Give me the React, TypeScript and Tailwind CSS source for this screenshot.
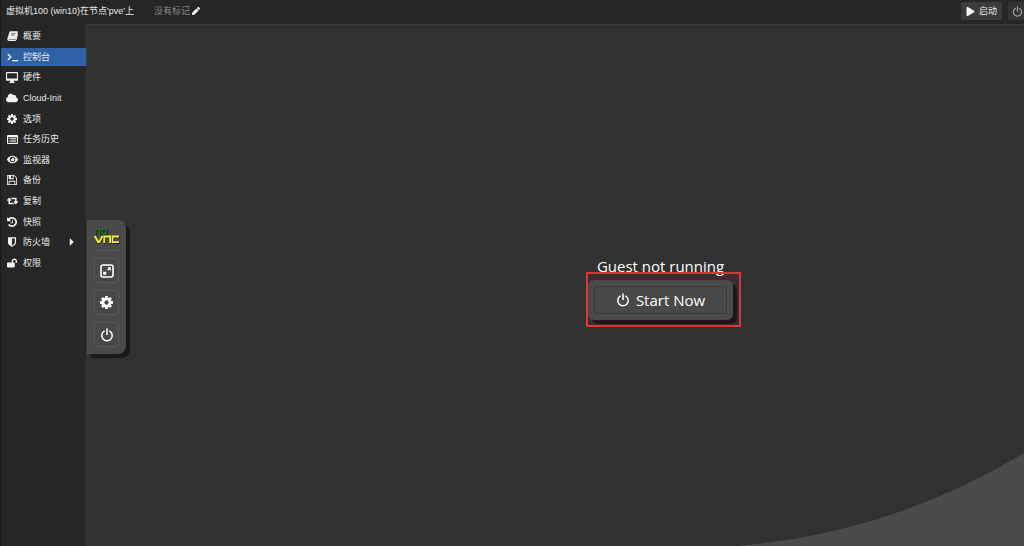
import { useState } from "react"
import type { ReactNode } from "react"
import { FaCaretRight, FaCloud, FaEye, FaLockOpen, FaPen, FaPlay } from "react-icons/fa"

function BookIcon() {
  return (
    <svg viewBox="0 0 11 10" className="w-[11px] h-[10px]">
      <path
        d="M3.9 .2h5.9c.8 0 1.200.6 1 1.300L9.200 7c-.2.600-.6.900-1.200.900H2.200c-.5 0-.6.600 0 .600h6c.4 0 .6-.2.700-.5l1.700-5.200c.4.200.5.600.4 1L9.600 8.800c-.2.700-.7 1.100-1.400 1.100H2C.9 9.900 0 8.800.4 7.600L2.300 1.500C2.500.7 3.100.2 3.900.2z"
        fill="currentColor"
      />
      <path d="M4.300 2.400h4.200M3.800 4h4.200" stroke="#262626" strokeWidth=".6" />
    </svg>
  )
}

function TerminalIcon() {
  return (
    <svg viewBox="0 0 11 10" className="w-[11px] h-[10px]" fill="none" stroke="currentColor" strokeWidth="1.300">
      <path d="M.8 2l3 3-3 3M5 8.600h6" />
    </svg>
  )
}

function DesktopIcon() {
  return (
    <svg viewBox="0 0 11 10" className="w-3 h-[11px]">
      <path
        d="M.9 0h9.200c.5 0 .9.400.9.900v6.200c0 .5-.4.900-.9.900H7l.3 1.200h.5V10H3.200v-.8h.5L4 8H.9C.4 8 0 7.600 0 7.100V.9C0 .4.400 0 .9 0zm.1 1v5h9V1z"
        fill="currentColor"
        fillRule="evenodd"
      />
    </svg>
  )
}

function CogIcon({ className }: { className: string }) {
  return (
    <svg viewBox="0 128 1536 1536" className={className} fill="currentColor">
      <path d="M1024 896q0-106-75-181t-181-75-181 75-75 181 75 181 181 75 181-75 75-181zm512-109v222q0 12-8 23t-20 13l-185 28q-19 54-39 91 35 50 107 138 10 12 10 25t-9 23q-27 37-99 108t-94 71q-12 0-26-9l-138-108q-44 23-91 38-16 136-29 186-7 28-36 28H657q-14 0-24.500-8.500T621 1634l-28-184q-49-16-90-37l-141 107q-10 9-25 9-14 0-25-11-126-114-165-168-7-10-7-23 0-12 8-23 15-21 51-66.500t54-70.500q-27-50-41-99L29 1040q-13-2-21-12.500T0 1004V782q0-12 8-23t19-13l186-28q14-46 39-92-40-57-107-138-10-12-10-24 0-10 9-23 26-36 98.500-107.500T337 262q13 0 26 10l138 107q44-23 91-38 16-136 29-186 7-28 36-28h222q14 0 24.500 8.500T915 157l28 184q49 16 90 37l142-107q9-9 24-9 13 0 25 10 129 119 165 170 7 8 7 22 0 12-8 23-15 21-51 66.500t-54 70.500q26 50 41 98l183 28q13 2 21 12.500t8 23.500z" />
    </svg>
  )
}

function ListIcon() {
  return (
    <svg viewBox="0 0 11 9" className="w-[11px] h-[9px]">
      <path
        d="M1 0h9a1 1 0 0 1 1 1v7a1 1 0 0 1-1 1H1a1 1 0 0 1-1-1V1a1 1 0 0 1 1-1zm0 2.300V8h9V2.300z"
        fill="currentColor"
        fillRule="evenodd"
      />
      <path d="M1.600 3.400h1M1.600 5.100h1M1.600 6.800h1M3.300 3.400h6M3.300 5.100h6M3.300 6.800h6" stroke="currentColor" strokeWidth=".9" />
    </svg>
  )
}

function SaveIcon() {
  return (
    <svg viewBox="0 128 1536 1536" className="size-[10px]" fill="currentColor">
      <path d="M384 1536h768v-384H384v384zm896 0h128V640q0-14-10-38.500t-20-34.500l-281-281q-10-10-34-20t-39-10v416q0 40-28 68t-68 28H352q-40 0-68-28t-28-68V256H128v1280h128v-416q0-40 28-68t68-28h832q40 0 68 28t28 68v416zM896 608V288q0-13-9.500-22.500T864 256H672q-13 0-22.500 9.500T640 288v320q0 13 9.500 22.500T672 640h192q13 0 22.500-9.500T896 608zm640 32v928q0 40-28 68t-68 28H96q-40 0-68-28t-28-68V224q0-40 28-68t68-28h928q40 0 88 20t76 48l280 280q28 28 48 76t20 88z" />
    </svg>
  )
}

function RetweetIcon() {
  return (
    <svg viewBox="0 384 1920 1152" className="w-[11px] h-2" fill="currentColor">
      <path d="M1280 1504q0 13-9.500 22.500t-22.500 9.500H288q-8 0-13.500-2t-9-7-5.500-8-3-11.500-1-11.500V896H64q-26 0-45-19T0 832q0-24 15-41l320-384q19-22 49-22t49 22l320 384q15 17 15 41 0 26-19 45t-45 19H512v384h576q16 0 25 11l160 192q7 10 7 21zm640-416q0 24-15 41l-320 384q-20 23-49 23t-49-23l-320-384q-15-17-15-41 0-26 19-45t45-19h192V640H832q-16 0-25-12L647 436q-7-9-7-20 0-13 9.500-22.500T672 384h960q8 0 13.500 2t9 7 5.500 8 3 11.500 1 11.500v600h192q26 0 45 19t19 45z" />
    </svg>
  )
}

function HistoryIcon() {
  return (
    <svg viewBox="0 128 1536 1536" className="size-[10px]" fill="currentColor">
      <path d="M1536 896q0 156-61 298t-164 245-245 164-298 61q-172 0-327-72.500T177 1387q-7-10-6.500-22.500T179 1344l137-138q10-9 25-9 16 2 23 12 73 95 179 147t225 52q104 0 198.500-40.500T1130 1258t109.500-163.500T1280 896t-40.500-198.500T1130 534 966.500 424.500 768 384q-98 0-188 35.500T420 521l137 138q31 30 14 69-17 40-59 40H64q-26 0-45-19T0 704V256q0-42 40-59 39-17 69 14l130 129q107-101 244.500-156.500T768 128q156 0 298 61t245 164 164 245 61 298zm-640-288v448q0 14-9 23t-23 9H544q-14 0-23-9t-9-23v-64q0-14 9-23t23-9h224V608q0-14 9-23t23-9h64q14 0 23 9t9 23z" />
    </svg>
  )
}

function ShieldIcon() {
  return (
    <svg viewBox="0 0 1280 1536" className="w-2 h-[10px]" fill="currentColor">
      <path d="M1088 832v-640h-448v1137q119-63 213-137 235-184 235-360zm192-768v768q0 86-33.500 170.500t-83 150-118 127.500-126.500 103-121 77.500-89.500 49.500-42.500 20q-12 6-26 6t-26-6q-16-7-42.500-20t-89.500-49.500-121-77.500-126.500-103-118-127.500-83-150-33.500-170.500v-768q0-26 19-45t45-19h1152q26 0 45 19t19 45z" />
    </svg>
  )
}

function ExpandIcon() {
  return (
    <svg viewBox="0 0 14 14" className="size-[14px]">
      <rect x="1" y="1" width="12" height="12" rx="2" fill="none" stroke="#fff" strokeWidth="1.600" />
      <path d="M7.300 3.300h3.500v3.500L9.700 5.800 8.600 6.700 7.300 5.400l1.100-1.100zM6.700 10.700H3.200V7.200l1.100 1L5.400 7.300l1.300 1.300-1.100 1.100z" fill="#fff" />
    </svg>
  )
}

function PowerIcon({ className }: { className: string }) {
  return (
    <svg viewBox="0 0 14 14" className={className} fill="none" stroke="currentColor" strokeWidth="1.500" strokeLinecap="round">
      <path d="M4.200 3.200a5.200 5.200 0 1 0 5.600 0M7 1v5.500" />
    </svg>
  )
}

function VncLogo() {
  return (
    <svg viewBox="0 0 26 16" className="w-[26px] h-4" fill="none">
      <g stroke="#151515" strokeWidth="1.500">
        <path d="M2.500 7V2.500h4V7M9 2.500h4v4.300H9z" />
        <path d="M1.500 9.500l3.500 6 4-6M11 16V9.300h6V16M26 9.300h-6.500v6H26" />
      </g>
      <path d="M1.700 6.500V1.700h4v4.800M8.200 1.700h4V6h-4z" stroke="#1a7a1d" strokeWidth="1.300" />
      <path d="M.8 8l3.400 6h1l3.400-6M10.300 15V8.500h5.900V15M25 8.500h-6.400v5.700H25" stroke="#f2f235" strokeWidth="1.800" />
    </svg>
  )
}

type Item = { label: string; icon: ReactNode; more?: boolean }

const items: Item[] = [
  { label: "概要", icon: <BookIcon /> },
  { label: "控制台", icon: <TerminalIcon /> },
  { label: "硬件", icon: <DesktopIcon /> },
  { label: "Cloud-Init", icon: <FaCloud size={12} /> },
  { label: "选项", icon: <CogIcon className="size-[10px]" /> },
  { label: "任务历史", icon: <ListIcon /> },
  { label: "监视器", icon: <FaEye size={11} /> },
  { label: "备份", icon: <SaveIcon /> },
  { label: "复制", icon: <RetweetIcon /> },
  { label: "快照", icon: <HistoryIcon /> },
  { label: "防火墙", icon: <ShieldIcon />, more: true },
  { label: "权限", icon: <FaLockOpen size={10} /> },
]

const vncButton =
  "flex size-[25px] items-center justify-center rounded-[4px] border border-[#595959] bg-[#484848] text-white"

export default function App() {
  const [active, setActive] = useState("控制台")

  return (
    <div className="flex min-h-screen flex-col overflow-hidden border-l border-[#1b1b1b] bg-[#262626] font-['Liberation_Sans','Noto_Sans_CJK_SC',sans-serif] text-[9px] leading-3 text-[#e8e8e8]">
      <header className="flex h-6 items-center overflow-hidden pb-[2px] pl-[5px]">
        <h1 className="whitespace-nowrap">虚拟机100 (win10)在节点'pve'上</h1>
        <button className="ml-5 flex items-center whitespace-nowrap text-[#8c8c8c]">
          没有标记
          <FaPen size={8} className="ml-[2px] text-white" />
        </button>
        <div className="-mr-1 ml-auto flex gap-[6px]">
          <button className="flex h-[18px] w-[41px] items-center justify-center gap-1 rounded-[2px] bg-[#3b3b3b]">
            <FaPlay size={9} className="text-white" />
            启动
          </button>
          <button aria-label="关机" className="flex h-[18px] w-5 items-center rounded-[2px] bg-[#333] pl-1 text-[#a5a5a5]">
            <PowerIcon className="size-[11px]" />
          </button>
        </div>
      </header>

      <div className="flex flex-1">
        <nav className="flex h-[248px] w-[85px] shrink-0 flex-col justify-between pt-[3px]">
          {items.map(item => (
            <button
              key={item.label}
              onClick={() => setActive(item.label)}
              className={
                item.label === active
                  ? "flex h-[18px] items-center bg-[#2f61a5] pl-[5px]"
                  : "flex h-[18px] items-center pl-[5px]"
              }
            >
              <span className="mr-[5px] flex w-3 justify-center text-[#f2f2f2]">{item.icon}</span>
              {item.label}
              {item.more && <FaCaretRight size={12} className="ml-auto mr-2" />}
            </button>
          ))}
        </nav>

        <main className="relative flex flex-1 items-center justify-center border-l border-t border-[#383838] bg-[#313131] pl-[210px] font-['Open_Sans','Noto_Sans',sans-serif] text-[15px] leading-6 text-white">
          <svg viewBox="0 0 289 93" className="absolute bottom-0 right-0 w-[289px] h-[93px]">
            <path d="M0 93Q155 81 289 0V93z" fill="#4a4a4a" />
          </svg>

          <div className="absolute left-0 top-[195px] flex w-[39px] flex-col items-center rounded-r-lg bg-[#4a4a4a] pb-[7px] pt-2 shadow-[4px_4px_0_#191919]">
            <VncLogo />
            <hr className="mb-[7px] mt-[6px] w-[25px] border-[#595959]" />
            <div className="flex flex-col gap-[7px]">
              <button aria-label="Fullscreen" className={vncButton}>
                <ExpandIcon />
              </button>
              <button aria-label="Settings" className={vncButton}>
                <CogIcon className="size-[13px]" />
              </button>
              <button aria-label="Power" className={vncButton}>
                <PowerIcon className="size-[14px]" />
              </button>
            </div>
          </div>

          <div className="flex flex-col items-center pt-[2px]">
            <p className="pb-[2px]">Guest not running</p>
            <div className="relative rounded-md bg-[#4a4a4a] p-[6px] shadow-[4px_4px_0_#191919]">
              <button className="flex h-7 w-[133px] items-center justify-center gap-[6px] rounded-[3px] border border-[#383838] bg-[#484848]">
                <PowerIcon className="size-[14px]" />
                Start Now
              </button>
              <div className="pointer-events-none absolute -bottom-[7px] -left-[2px] -right-2 -top-2 border-2 border-[#e03535]" />
            </div>
          </div>
        </main>
      </div>
    </div>
  )
}
